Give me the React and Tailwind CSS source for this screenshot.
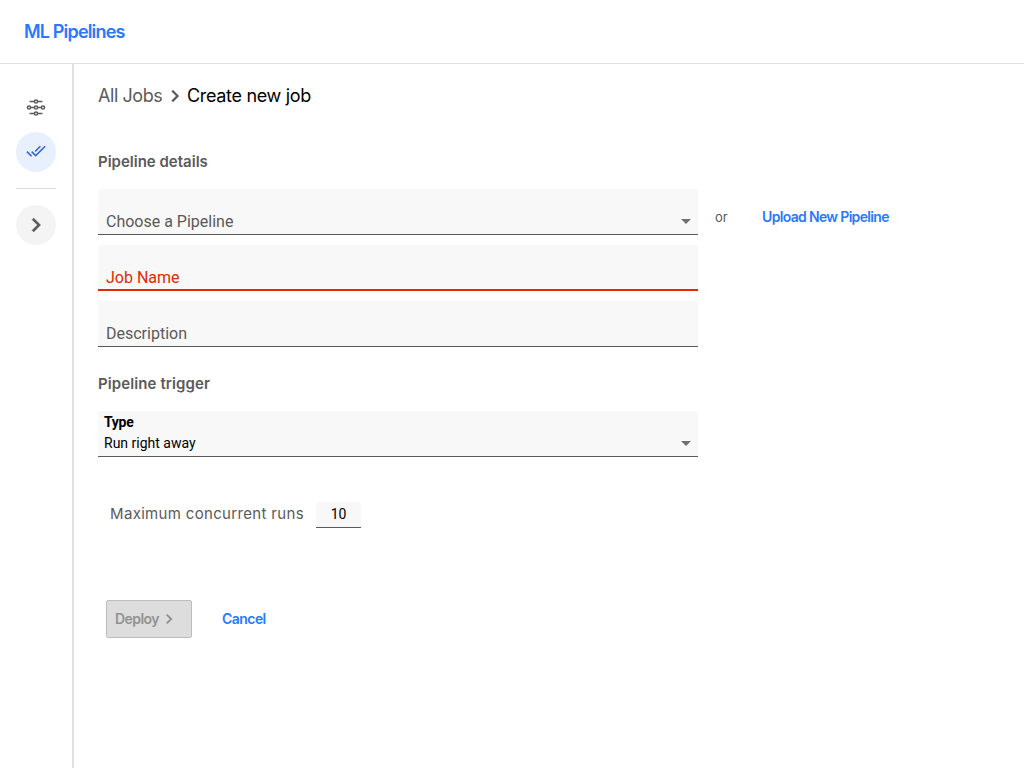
const CHEVRON = 'M10 6L8.59 7.41 13.17 12l-4.58 4.59L10 18l6-6z';

function Chevron({ className }) {
  return (
    <svg viewBox="0 0 24 24" fill="currentColor" stroke="currentColor" strokeWidth="0.3" className={className}>
      <path d={CHEVRON} />
    </svg>
  );
}

function PipelineIcon() {
  return (
    <svg viewBox="0 0 20 20" className="size-5" fill="none" stroke="#5a5a5a" strokeWidth="1.5">
      <path d="M3.6 3.5h4.5M11.9 3.5h4.5M4.9 9.5h3.2M11.9 9.5h3.2M3.6 15.5h4.5M11.9 15.5h4.5" />
      <circle cx="10" cy="3.5" r="1.6" />
      <circle cx="3" cy="9.5" r="1.6" />
      <circle cx="10" cy="9.5" r="1.6" />
      <circle cx="17" cy="9.5" r="1.6" />
      <circle cx="10" cy="15.5" r="1.6" />
    </svg>
  );
}

function JobsIcon() {
  return (
    <svg viewBox="0 0 24 24" className="mb-[2px] size-5" fill="#3367d6">
      <path d="M18 7l-1.41-1.41-6.34 6.34 1.41 1.41L18 7zm4.24-1.41L11.66 16.17 7.48 12l-1.41 1.41L11.66 19l12-12-1.42-1.41zM.41 13.41L6 19l1.41-1.41L1.83 12 .41 13.41z" />
    </svg>
  );
}

function Caret() {
  return (
    <svg viewBox="0 0 10 5" className="h-[5px] w-[10px]" fill="#707070">
      <path d="M0 0h10L5 5z" />
    </svg>
  );
}

export default function App() {
  return (
    <div className="flex h-screen flex-col bg-white font-['Inter',sans-serif] text-[#5a5a5a]">
      <header className="flex h-16 shrink-0 items-center border-b border-[#e0e0e0] px-6">
        <h1 className="text-[18px] font-semibold tracking-[-0.83px] text-[#2979ff]">ML Pipelines</h1>
      </header>
      <div className="flex min-h-0 flex-1">
        <nav className="flex w-[74px] shrink-0 flex-col border-r-2 border-[#e0e0e0] pl-4 pt-6">
          <button className="flex size-10 items-center justify-center rounded-full">
            <PipelineIcon />
          </button>
          <button className="mt-1 flex size-10 items-center justify-center rounded-full bg-[#e9f0fd]">
            <JobsIcon />
          </button>
          <div className="mt-4 h-px w-10 bg-[#dadada]" />
          <button className="mt-4 flex size-10 items-center justify-center rounded-full bg-[#f4f4f4]">
            <Chevron className="size-7" />
          </button>
        </nav>
        <main className="flex flex-1 flex-col pl-6">
          <div className="flex h-16 items-center whitespace-nowrap text-[18px]">
            <span className="w-[65px] pb-[2px] tracking-[-0.42px]">All Jobs</span>
            <Chevron className="size-6" />
            <span className="pb-[2px] tracking-[-0.32px] text-black">Create new job</span>
          </div>
          <h2 className="mt-[22px] h-6 text-[15px] font-semibold leading-6 tracking-[0px]">Pipeline details</h2>
          <div className="mt-[15px] flex h-[46px]">
            <div className="flex w-[600px] items-end justify-between rounded-t-[4px] border-b border-[#5a5a5a] bg-[#f8f8f8] pl-2 pr-[7px] font-['Roboto',sans-serif]">
              <span className="h-6 text-base leading-6">Choose a Pipeline</span>
              <span className="flex h-[15px]"><Caret /></span>
            </div>
            <span className="ml-[17px] mt-[18px] w-[47px] text-[13px] leading-5">or</span>
            <button className="mt-[18px] h-5 whitespace-nowrap text-[14px] font-semibold leading-5 tracking-[-0.67px] text-[#2979ff]">Upload New Pipeline</button>
          </div>
          <div className="mt-[10px] flex h-[46px] w-[600px] items-end rounded-t-[4px] border-b-2 border-[#dd2c00] bg-[#f8f8f8] pl-2 font-['Roboto',sans-serif]">
            <span className="h-[23px] text-base leading-6 text-[#dd2c00]">Job Name</span>
          </div>
          <div className="mt-[10px] flex h-[46px] w-[600px] items-end rounded-t-[4px] border-b border-[#5a5a5a] bg-[#f8f8f8] pl-2 font-['Roboto',sans-serif]">
            <span className="h-6 text-base leading-6">Description</span>
          </div>
          <h2 className="mt-[25px] h-6 text-[15px] font-semibold leading-6 tracking-[0.1px]">Pipeline trigger</h2>
          <div className="mt-[15px] flex h-[46px] w-[600px] items-end justify-between rounded-t-[4px] border-b border-[#5a5a5a] bg-[#f8f8f8] pl-[6px] pr-[7px] font-['Roboto',sans-serif] text-sm text-black">
            <div className="flex h-[45px] flex-col">
              <b className="h-[22px] leading-[23px] tracking-[-0.3px]">Type</b>
              <span className="leading-5">Run right away</span>
            </div>
            <span className="flex h-[15px]"><Caret /></span>
          </div>
          <div className="mt-[45px] flex h-[26px] pl-3">
            <span className="w-[206px] whitespace-nowrap text-[15px] leading-6 tracking-[0.33px]">Maximum concurrent runs</span>
            <span className="w-[45px] rounded-t-[4px] border-b border-[#5a5a5a] bg-[#f8f8f8] text-center font-['Roboto',sans-serif] text-sm leading-6 text-black">10</span>
          </div>
          <div className="mt-[72px] flex h-[38px] items-center pl-2 text-[14px] font-semibold tracking-[-0.55px]">
            <button className="flex h-[38px] w-[86px] items-center rounded-[2px] border border-[#bdbdbd] bg-[#dddddd] pl-2 text-[#929292]">
              <span className="w-11 pb-[2px]">Deploy</span>
              <Chevron className="size-5" />
            </button>
            <button className="ml-[30px] pb-[2px] text-[#2979ff]">Cancel</button>
          </div>
        </main>
      </div>
    </div>
  );
}
